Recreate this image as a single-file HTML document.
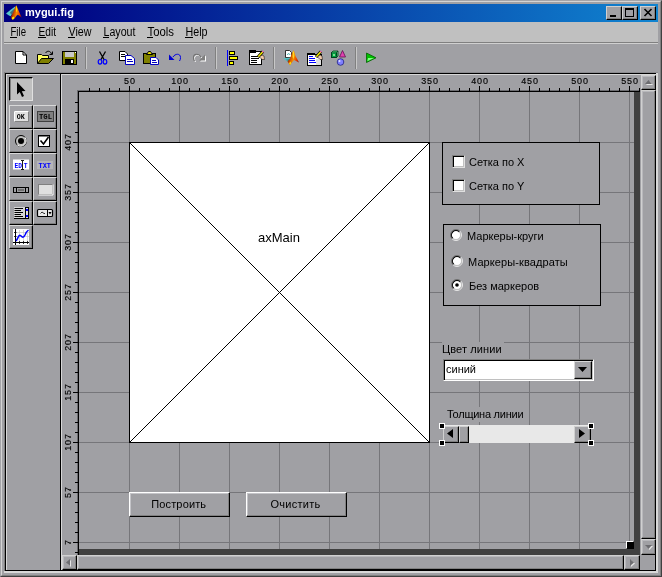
<!DOCTYPE html>
<html><head><meta charset="utf-8"><title>mygui.fig</title>
<style>
html,body{margin:0;padding:0;}
body{width:662px;height:577px;overflow:hidden;background:#a0a0a4;position:relative;font-family:"Liberation Sans",sans-serif;font-size:11px;color:#000;}
.a{position:absolute;box-sizing:border-box;}
.t{position:absolute;white-space:nowrap;line-height:1;}
.r{border:1px solid;border-color:#fff #000 #000 #fff;box-shadow:inset -1px -1px 0 #808080;background:#a0a0a4;}
.pb{width:24px;height:24px;border:1px solid;border-color:#d8d8d8 #000 #000 #d8d8d8;box-shadow:inset -1px -1px 0 #808080;background:#a0a0a4;}
.sb{border:1px solid;border-color:#d0d0d0 #000 #000 #d0d0d0;box-shadow:inset -1px -1px 0 #808080, inset 1px 1px 0 #b8b8bc;background:#a0a0a4;}
u{text-decoration:none;border-bottom:1px solid #000;}
svg{position:absolute;overflow:visible;}
</style></head><body><div id="w" style="position:absolute;left:0;top:0;width:662px;height:577px;will-change:transform;">
<div class="a" style="left:0;top:0;width:662px;height:577px;border:1px solid;border-color:#a4a4a8 #404040 #404040 #a4a4a8;"></div>
<div class="a" style="left:1px;top:1px;width:660px;height:575px;border:1px solid;border-color:#d4d4d4 #808080 #808080 #d4d4d4;"></div>
<div class="a" style="left:4px;top:4px;width:654px;height:18px;background:linear-gradient(to right,#000080 0%,#000484 8%,#1084d0 100%);"></div>
<svg style="left:0;top:0" width="30" height="24" viewBox="0 0 30 24">
<defs><linearGradient id="lg1" x1="0" y1="0.3" x2="1" y2="0.6"><stop offset="0" stop-color="#701000"/><stop offset="0.3" stop-color="#c84000"/><stop offset="0.55" stop-color="#f89000"/><stop offset="0.8" stop-color="#e84000"/><stop offset="1" stop-color="#901000"/></linearGradient></defs>
<polygon points="6,13.600 11,9.500 15.500,6.200 14,12 10.500,16.300 9,15.500" fill="#58c8c8"/>
<polygon points="10,12.500 14.500,8.500 13.500,13 11.500,15" fill="#407078"/>
<polygon points="11,16.500 13.500,11.500 15.300,7 16.300,5.200 17.500,8 19.200,12 21.800,17.800 19.500,15.800 17.800,14.800 16.500,15.800 14.500,18.500 12.800,19.800 11.500,18.500" fill="url(#lg1)"/>
<polygon points="15.800,7 16.400,5.500 17,8 17,12.500 16,11" fill="#ffe000"/>
<polygon points="12,17.500 14,16.500 14.200,18.500 12.800,19.800 11.800,18.800" fill="#ffe800"/>
</svg>
<div class="t" style="left:25px;top:7px;font-weight:bold;font-size:11px;color:#fff;">mygui.fig</div>
<div class="a r" style="left:606px;top:6px;width:16px;height:14px;border-color:#d0d0d0 #000 #000 #d0d0d0;"></div>
<div class="a" style="left:610px;top:15px;width:6px;height:2px;background:#000;"></div>
<div class="a r" style="left:622px;top:6px;width:16px;height:14px;border-color:#d0d0d0 #000 #000 #d0d0d0;"></div>
<div class="a" style="left:625px;top:8px;width:9px;height:9px;border:1px solid #000;border-top-width:2px;"></div>
<div class="a r" style="left:640px;top:6px;width:16px;height:14px;border-color:#d0d0d0 #000 #000 #d0d0d0;"></div>
<svg style="left:644px;top:9px" width="8" height="7" viewBox="0 0 8 7"><path d="M0.5,0 L7.5,7 M7.5,0 L0.5,7" stroke="#000" stroke-width="1.6" fill="none"/></svg>
<div class="a" style="left:4px;top:22px;width:654px;height:20px;background:#c0c0c0;"></div>
<div class="a" style="left:4px;top:42px;width:654px;height:1px;background:#808080;"></div>
<div class="a" style="left:4px;top:43px;width:654px;height:1px;background:#d0d0d0;"></div>
<svg style="left:0;top:22px" width="300" height="20" viewBox="0 22 300 20"><g font-size="12px" font-family="Liberation Sans, sans-serif"><text x="10.5" y="36" textLength="15.5" lengthAdjust="spacingAndGlyphs">File</text><rect x="10" y="37" width="7" height="1" fill="#000" shape-rendering="crispEdges"/><text x="38.5" y="36" textLength="17.5" lengthAdjust="spacingAndGlyphs">Edit</text><rect x="38" y="37" width="8" height="1" fill="#000" shape-rendering="crispEdges"/><text x="68.5" y="36" textLength="23" lengthAdjust="spacingAndGlyphs">View</text><rect x="68" y="37" width="7" height="1" fill="#000" shape-rendering="crispEdges"/><text x="103.5" y="36" textLength="32" lengthAdjust="spacingAndGlyphs">Layout</text><rect x="103" y="37" width="6" height="1" fill="#000" shape-rendering="crispEdges"/><text x="147.5" y="36" textLength="26.5" lengthAdjust="spacingAndGlyphs">Tools</text><rect x="147" y="37" width="6" height="1" fill="#000" shape-rendering="crispEdges"/><text x="185.5" y="36" textLength="22" lengthAdjust="spacingAndGlyphs">Help</text><rect x="185" y="37" width="8" height="1" fill="#000" shape-rendering="crispEdges"/></g></svg>
<svg style="left:0;top:44px" width="400" height="28" viewBox="0 44 400 28">
<defs><linearGradient id="lg2" x1="0" y1="0.3" x2="1" y2="0.6"><stop offset="0" stop-color="#701000"/><stop offset="0.3" stop-color="#d05000"/><stop offset="0.55" stop-color="#f89000"/><stop offset="0.8" stop-color="#e84000"/><stop offset="1" stop-color="#a01000"/></linearGradient></defs>
<g shape-rendering="crispEdges">
<!-- separators -->
<rect x="85" y="47" width="1" height="22" fill="#808080"/><rect x="86" y="47" width="1" height="22" fill="#c8c8c8"/>
<rect x="215" y="47" width="1" height="22" fill="#808080"/><rect x="216" y="47" width="1" height="22" fill="#c8c8c8"/>
<rect x="273" y="47" width="1" height="22" fill="#808080"/><rect x="274" y="47" width="1" height="22" fill="#c8c8c8"/>
<rect x="355" y="47" width="1" height="22" fill="#808080"/><rect x="356" y="47" width="1" height="22" fill="#c8c8c8"/>
</g>
<!-- new -->
<path d="M15.5,51.5 H23 L26.5,55 V63.5 H15.5 Z" fill="#fff" stroke="#000" stroke-width="1"/>
<path d="M23,51.5 V55 H26.5" fill="none" stroke="#000" stroke-width="1"/>
<!-- open -->
<path d="M37.5,63.5 V54.5 H41.5 L42.5,55.5 H48.5 V58" fill="#ffff60" stroke="#000" stroke-width="1"/>
<path d="M37.5,63.5 L41.5,58.5 H53.5 L48.5,63.5 Z" fill="#808000" stroke="#000" stroke-width="1"/>
<path d="M45.5,53 C47,50.5 50.5,50.5 51.5,54" fill="none" stroke="#000" stroke-width="1"/>
<path d="M49.5,54.5 H52.5 V51.5" fill="none" stroke="#000" stroke-width="1"/>
<!-- save -->
<rect x="62.500" y="51.500" width="14" height="13" fill="#808000" stroke="#000" stroke-width="1"/>
<rect x="65" y="52" width="9" height="5" fill="#c8c8c8"/>
<rect x="65" y="59" width="9" height="5" fill="#000"/>
<rect x="71" y="60" width="2" height="3" fill="#fff"/>
<rect x="75" y="52" width="1" height="1" fill="#fff"/>
<!-- cut -->
<path d="M99.500,51.500 L104.300,60 M105.500,51.500 L100.700,60" stroke="#000" stroke-width="1.300" fill="none"/>
<ellipse cx="100" cy="61.800" rx="1.800" ry="2.300" fill="none" stroke="#0000ff" stroke-width="1.200"/>
<ellipse cx="105" cy="61.800" rx="1.800" ry="2.300" fill="none" stroke="#0000ff" stroke-width="1.200"/>
<!-- copy -->
<path d="M119.500,51.500 H125 L127.500,54 V60.500 H119.500 Z" fill="#fff" stroke="#000" stroke-width="1"/>
<path d="M121,54.500 H125 M121,56.500 H125" stroke="#000" stroke-width="1" fill="none"/>
<path d="M125.500,55.500 H131 L134.500,58.500 V64.500 H125.500 Z" fill="#fff" stroke="#0000c0" stroke-width="1"/>
<path d="M127,59.500 H132 M127,61.500 H133" stroke="#0000c0" stroke-width="1" fill="none"/>
<!-- paste -->
<rect x="143.500" y="53.500" width="12" height="10" fill="#808000" stroke="#000" stroke-width="1"/>
<path d="M146.500,54.500 L148.500,51.500 H150.500 L152.500,54.500 Z" fill="#e8e000" stroke="#000" stroke-width="1"/>
<path d="M150.500,57.500 H156 L158.500,60 V64.500 H150.500 Z" fill="#fff" stroke="#0000c0" stroke-width="1"/>
<path d="M152,60.500 H156 M152,62.500 H157" stroke="#0000c0" stroke-width="1" fill="none"/>
<!-- undo -->
<path d="M173,57 C175,53.500 180.500,53 180.500,57.500 C180.500,59 180.200,60 179.500,61" fill="none" stroke="#0000e0" stroke-width="1"/>
<polygon points="169,54.500 169,60 174.500,60" fill="#0000d0"/>
<!-- redo (disabled) -->
<g transform="translate(-1,0)">
<path d="M203,58 C201,54.500 195.500,54 195.500,58.500 C195.500,60 195.800,61 196.500,62" fill="none" stroke="#fff" stroke-width="1"/>
<polygon points="207,55.500 207,61.500 201,61.500" fill="#fff"/>
<path d="M202,57 C200,53.500 194.500,53 194.500,57.500 C194.500,59 194.800,60 195.500,61" fill="none" stroke="#707070" stroke-width="1.100"/>
<polygon points="206,54.500 206,60.500 200,60.500" fill="#808080"/>
</g>
<!-- align -->
<rect x="227" y="50" width="1" height="16" fill="#0000ff"/>
<rect x="229.500" y="51.500" width="5" height="3" fill="#ffff00" stroke="#000" stroke-width="1"/>
<rect x="229.500" y="56.500" width="8" height="3" fill="#ffff00" stroke="#000" stroke-width="1"/>
<rect x="229.500" y="61.500" width="4" height="3" fill="#ffff00" stroke="#000" stroke-width="1"/>
<!-- menu editor -->
<rect x="249.500" y="51.500" width="12" height="13" fill="#fff" stroke="#000" stroke-width="1"/>
<rect x="249" y="50" width="7" height="3" fill="#000"/>
<path d="M251,56.500 H259 M251,58.500 H259 M251,60.500 H257 M251,62.500 H257" stroke="#000" stroke-width="1" fill="none"/>
<path d="M258,57 L263,51.500" stroke="#000" stroke-width="3" fill="none"/>
<path d="M258.300,56.700 L262.800,51.700" stroke="#f0e800" stroke-width="1.600" fill="none"/>
<path d="M262.300,51.200 L263.500,52.300" stroke="#f060c0" stroke-width="1.500"/>
<path d="M259.500,57 L262,55 L264,56 L264.500,59.500 L262,59.500 Z" fill="#f0c8a8" stroke="#000" stroke-width="0.500"/>
<!-- m-file editor -->
<path d="M285.500,50.500 H289.500 L291.500,52.500 V57.500 H285.500 Z" fill="#fff" stroke="#202020" stroke-width="0.900"/>
<path d="M287.300,54.800 C288,53.300 289.300,53.300 290,54.800" stroke="#30a8a8" stroke-width="1" fill="none"/>
<polygon points="283,58.200 291.500,57.500 290,61 288,62 286,60.500" fill="#58c0c0"/>
<polygon points="285.500,59.800 290.500,58.500 289,61.500" fill="#389098"/>
<polygon points="287.500,61.500 290,58.500 292,53 293.800,50.300 295.500,56 299,62.500 296.500,61.200 294,60 291.500,63 290,65.300" fill="url(#lg2)"/>
<polygon points="292.700,52.500 293.800,50.500 294.300,56 293.400,59 292.600,57" fill="#ffd820"/>
<polygon points="289,63 290.800,61.500 291,63.500 290,65.300" fill="#ffe000"/>
<!-- property inspector -->
<rect x="307.500" y="54.500" width="14" height="11" fill="#fff" stroke="#000" stroke-width="1"/>
<rect x="316" y="59" width="5" height="6" fill="#e0e0e0"/>
<rect x="307" y="53" width="8" height="2" fill="#000"/>
<path d="M309,56.500 H313 M309,58.500 H315 M309,60.500 H315 M309,62.500 H316" stroke="#0000ff" stroke-width="1" fill="none"/>
<path d="M316,57 L321,51.500" stroke="#000" stroke-width="3" fill="none"/>
<path d="M316.300,56.700 L320.800,51.700" stroke="#f0e800" stroke-width="1.600" fill="none"/>
<path d="M320.300,51.200 L321.500,52.300" stroke="#f060c0" stroke-width="1.500"/>
<path d="M317.500,57 L320,55 L322,56 L322.500,59.500 L320,59.500 Z" fill="#f0c8a8" stroke="#000" stroke-width="0.500"/>
<!-- object browser -->
<rect x="331.500" y="52.500" width="5" height="5" fill="#00a040" stroke="#004020" stroke-width="1"/>
<path d="M331.500,52.500 L333,51 H338 L336.500,52.500 M338,51 V56 L336.500,57.500" fill="#40d070" stroke="#004020" stroke-width="0.800"/>
<path d="M333,55 H335 M334,54 V56" stroke="#c0ffc0" stroke-width="0.800"/>
<polygon points="342.500,50.500 345.500,57 339.500,57" fill="#e040b0" stroke="#601050" stroke-width="0.800"/>
<circle cx="340.500" cy="62" r="3.300" fill="#8080ff" stroke="#202080" stroke-width="0.800"/>
<circle cx="339.500" cy="61" r="1" fill="#e0e0ff"/>
<!-- run -->
<polygon points="366.500,53 376,57.800 366.500,62.500" fill="#00c000" stroke="#006000" stroke-width="0.800"/>
<polygon points="368,58 374,58 367.300,61.300" fill="#80ff80"/>
</svg>

<div class="a" style="left:4px;top:72px;width:654px;height:1px;background:#8c8c90;"></div>
<div class="a" style="left:4px;top:72px;width:1px;height:500px;background:#808080;"></div>
<div class="a" style="left:5px;top:73px;width:653px;height:1px;background:#000;"></div>
<div class="a" style="left:6px;top:74px;width:650px;height:1px;background:#d8d8d8;"></div>
<div class="a" style="left:5px;top:73px;width:1px;height:498px;background:#000;"></div>
<div class="a" style="left:6px;top:74px;width:1px;height:496px;background:#d8d8d8;"></div>
<div class="a" style="left:60px;top:74px;width:1px;height:497px;background:#000;"></div>
<div class="a" style="left:61px;top:75px;width:1px;height:495px;background:#d8d8d8;"></div>
<div class="a" style="left:5px;top:570px;width:651px;height:1px;background:#000;"></div>
<div class="a" style="left:4px;top:571px;width:654px;height:2px;background:#d8d8d8;"></div>
<div class="a" style="left:656px;top:73px;width:2px;height:500px;background:#d8d8d8;"></div>
<div class="a" style="left:655px;top:555px;width:1px;height:16px;background:#000;"></div>
<div class="a" style="left:9px;top:77px;width:24px;height:24px;background:#c0c0c0;border:1px solid;border-color:#000 #e0e0e0 #e0e0e0 #000;box-shadow:inset 1px 1px 0 #808080;"></div>
<div class="a pb" style="left:9px;top:105px;"></div>
<div class="a pb" style="left:33px;top:105px;"></div>
<div class="a pb" style="left:9px;top:129px;"></div>
<div class="a pb" style="left:33px;top:129px;"></div>
<div class="a pb" style="left:9px;top:153px;"></div>
<div class="a pb" style="left:33px;top:153px;"></div>
<div class="a pb" style="left:9px;top:177px;"></div>
<div class="a pb" style="left:33px;top:177px;"></div>
<div class="a pb" style="left:9px;top:201px;"></div>
<div class="a pb" style="left:33px;top:201px;"></div>
<div class="a pb" style="left:9px;top:225px;"></div>
<svg style="left:0;top:74px" width="62" height="180" viewBox="0 74 62 180">
<!-- arrow -->
<polygon points="17,82 17,94.500 19.800,92 22,97 24,96 21.800,91.200 25.500,91" fill="#000"/>
<g font-family="Liberation Mono, monospace" font-weight="bold" font-size="7px">
<!-- OK -->
<rect x="14.500" y="111.500" width="14" height="10" fill="#e0e0e0" stroke="#808080" stroke-width="1"/>
<path d="M14.500,121.500 V111.500 H28.500" stroke="#fff" stroke-width="1" fill="none"/>
<text x="16.800" y="119.200" textLength="8" lengthAdjust="spacingAndGlyphs" font-size="6.500px">OK</text>
<!-- TGL -->
<rect x="37.500" y="111.500" width="16" height="10" fill="#808080" stroke="#404040" stroke-width="1"/>
<text x="39" y="119.300" textLength="13" lengthAdjust="spacingAndGlyphs">TGL</text>
<!-- EDIT -->
<rect x="13" y="159.500" width="16" height="10" fill="#fff"/>
<text x="14.500" y="167.800" fill="#0000ff" textLength="7.500" lengthAdjust="spacingAndGlyphs">ED</text>
<text x="23.800" y="167.800" fill="#0000ff" textLength="3.800" lengthAdjust="spacingAndGlyphs">T</text>
<path d="M22.500,161 V169 M21,160.500 H24 M21,169.500 H24" stroke="#000" stroke-width="0.900" fill="none"/>
<!-- TXT -->
<rect x="37" y="161" width="16" height="8" fill="#b4b4b8"/>
<text x="38.500" y="167.800" fill="#0000ff" textLength="12.500" lengthAdjust="spacingAndGlyphs">TXT</text>
</g>
<!-- radio -->
<circle cx="21" cy="141" r="5.500" fill="#c0c0c0" stroke="#000" stroke-width="1"/>
<path d="M17.200,144.800 A5.400,5.400 0 0 0 24.800,137.200" stroke="#fff" stroke-width="1" fill="none"/>
<circle cx="21" cy="141" r="3" fill="#000"/>
<!-- checkbox -->
<rect x="38.500" y="135.500" width="11" height="11" fill="#fff" stroke="#000" stroke-width="1"/>
<rect x="38" y="135" width="12" height="1.500" fill="#000"/>
<path d="M40.500,140.500 L43.500,144 L48.500,137" stroke="#000" stroke-width="1.600" fill="none"/>
<!-- slider -->
<rect x="13.500" y="187.500" width="15" height="5" fill="#a0a0a4" stroke="#000" stroke-width="1"/>
<path d="M16.500,188 V192 M25.500,188 V192" stroke="#000" stroke-width="1"/>
<rect x="18" y="189" width="6" height="2" fill="#707070"/>
<!-- frame -->
<rect x="38.500" y="184.500" width="14" height="10" fill="#e0e0e0" stroke="#808080" stroke-width="1"/>
<path d="M38.500,195 H53 V184.500" stroke="#fff" stroke-width="1" fill="none"/>
<!-- listbox -->
<rect x="14" y="207" width="12" height="12" fill="#d8d8d8"/>
<path d="M14.500,208.500 H23 M14.500,210.500 H21 M14.500,212.500 H23 M14.500,214.500 H21 M14.500,216.500 H23 M14,218.500 H29" stroke="#000" stroke-width="1" fill="none"/>
<rect x="25.500" y="207.500" width="3" height="11" fill="#e0e0e0" stroke="#000" stroke-width="1"/>
<rect x="26" y="209" width="2" height="2" fill="#0000ff"/><rect x="26" y="215" width="2" height="2" fill="#0000ff"/>
<!-- popup -->
<rect x="37.500" y="209.500" width="15" height="7" rx="1" fill="#e8e8e8" stroke="#000" stroke-width="1.200"/>
<path d="M47.500,210 V216" stroke="#000" stroke-width="1"/>
<path d="M40.500,213.500 L42,212 L44,213.500 H45" stroke="#000" stroke-width="0.800" fill="none"/>
<polygon points="48.500,212 51.500,212 50,214.500" fill="#000"/>
<!-- axes -->
<rect x="13" y="229" width="16" height="16" fill="#fff"/>
<path d="M15.500,229 V245 M13,242.500 H29" stroke="#000" stroke-width="1" fill="none"/>
<path d="M14,232.500 H17 M14,236.500 H17 M19.500,241 V244 M23.500,241 V244 M27.500,241 V244" stroke="#000" stroke-width="0.800" fill="none"/>
<path d="M19.500,230 V241 M23.500,230 V241 M27.500,230 V241 M16,232.500 H29 M16,236.500 H29" stroke="#c0c0c0" stroke-width="0.600" fill="none"/>
<path d="M16,241 C18,239 18.500,234 20.500,235.500 C22.500,237.500 23.500,238 25,235 C26,232.500 27,231 28.500,230" stroke="#0000ff" stroke-width="1.500" fill="none"/>
</svg>

<svg style="left:0;top:0" width="662" height="577" viewBox="0 0 662 577" shape-rendering="crispEdges"><rect x="129" y="92" width="1" height="457" fill="#76767a"/><rect x="179" y="92" width="1" height="457" fill="#76767a"/><rect x="229" y="92" width="1" height="457" fill="#76767a"/><rect x="279" y="92" width="1" height="457" fill="#76767a"/><rect x="329" y="92" width="1" height="457" fill="#76767a"/><rect x="379" y="92" width="1" height="457" fill="#76767a"/><rect x="429" y="92" width="1" height="457" fill="#76767a"/><rect x="479" y="92" width="1" height="457" fill="#76767a"/><rect x="529" y="92" width="1" height="457" fill="#76767a"/><rect x="579" y="92" width="1" height="457" fill="#76767a"/><rect x="629" y="92" width="1" height="457" fill="#76767a"/><rect x="79" y="142" width="555" height="1" fill="#76767a"/><rect x="79" y="192" width="555" height="1" fill="#76767a"/><rect x="79" y="242" width="555" height="1" fill="#76767a"/><rect x="79" y="292" width="555" height="1" fill="#76767a"/><rect x="79" y="342" width="555" height="1" fill="#76767a"/><rect x="79" y="392" width="555" height="1" fill="#76767a"/><rect x="79" y="442" width="555" height="1" fill="#76767a"/><rect x="79" y="492" width="555" height="1" fill="#76767a"/><rect x="79" y="542" width="555" height="1" fill="#76767a"/><rect x="634" y="92" width="6" height="463" fill="#404040"/><rect x="79" y="549" width="561" height="6" fill="#404040"/><rect x="77" y="90" width="563" height="1" fill="#6c6c70"/><rect x="77" y="90" width="1" height="465" fill="#6c6c70"/><rect x="78" y="91" width="562" height="1" fill="#000"/><rect x="78" y="91" width="1" height="464" fill="#000"/><rect x="89" y="88" width="1" height="3" fill="#000"/><rect x="99" y="88" width="1" height="3" fill="#000"/><rect x="109" y="88" width="1" height="3" fill="#000"/><rect x="119" y="88" width="1" height="3" fill="#000"/><rect x="129" y="86" width="1" height="5" fill="#000"/><rect x="139" y="88" width="1" height="3" fill="#000"/><rect x="149" y="88" width="1" height="3" fill="#000"/><rect x="159" y="88" width="1" height="3" fill="#000"/><rect x="169" y="88" width="1" height="3" fill="#000"/><rect x="179" y="86" width="1" height="5" fill="#000"/><rect x="189" y="88" width="1" height="3" fill="#000"/><rect x="199" y="88" width="1" height="3" fill="#000"/><rect x="209" y="88" width="1" height="3" fill="#000"/><rect x="219" y="88" width="1" height="3" fill="#000"/><rect x="229" y="86" width="1" height="5" fill="#000"/><rect x="239" y="88" width="1" height="3" fill="#000"/><rect x="249" y="88" width="1" height="3" fill="#000"/><rect x="259" y="88" width="1" height="3" fill="#000"/><rect x="269" y="88" width="1" height="3" fill="#000"/><rect x="279" y="86" width="1" height="5" fill="#000"/><rect x="289" y="88" width="1" height="3" fill="#000"/><rect x="299" y="88" width="1" height="3" fill="#000"/><rect x="309" y="88" width="1" height="3" fill="#000"/><rect x="319" y="88" width="1" height="3" fill="#000"/><rect x="329" y="86" width="1" height="5" fill="#000"/><rect x="339" y="88" width="1" height="3" fill="#000"/><rect x="349" y="88" width="1" height="3" fill="#000"/><rect x="359" y="88" width="1" height="3" fill="#000"/><rect x="369" y="88" width="1" height="3" fill="#000"/><rect x="379" y="86" width="1" height="5" fill="#000"/><rect x="389" y="88" width="1" height="3" fill="#000"/><rect x="399" y="88" width="1" height="3" fill="#000"/><rect x="409" y="88" width="1" height="3" fill="#000"/><rect x="419" y="88" width="1" height="3" fill="#000"/><rect x="429" y="86" width="1" height="5" fill="#000"/><rect x="439" y="88" width="1" height="3" fill="#000"/><rect x="449" y="88" width="1" height="3" fill="#000"/><rect x="459" y="88" width="1" height="3" fill="#000"/><rect x="469" y="88" width="1" height="3" fill="#000"/><rect x="479" y="86" width="1" height="5" fill="#000"/><rect x="489" y="88" width="1" height="3" fill="#000"/><rect x="499" y="88" width="1" height="3" fill="#000"/><rect x="509" y="88" width="1" height="3" fill="#000"/><rect x="519" y="88" width="1" height="3" fill="#000"/><rect x="529" y="86" width="1" height="5" fill="#000"/><rect x="539" y="88" width="1" height="3" fill="#000"/><rect x="549" y="88" width="1" height="3" fill="#000"/><rect x="559" y="88" width="1" height="3" fill="#000"/><rect x="569" y="88" width="1" height="3" fill="#000"/><rect x="579" y="86" width="1" height="5" fill="#000"/><rect x="589" y="88" width="1" height="3" fill="#000"/><rect x="599" y="88" width="1" height="3" fill="#000"/><rect x="609" y="88" width="1" height="3" fill="#000"/><rect x="619" y="88" width="1" height="3" fill="#000"/><rect x="629" y="86" width="1" height="5" fill="#000"/><rect x="639" y="88" width="1" height="3" fill="#000"/><rect x="75" y="552" width="3" height="1" fill="#000"/><rect x="73" y="542" width="5" height="1" fill="#000"/><rect x="75" y="532" width="3" height="1" fill="#000"/><rect x="75" y="522" width="3" height="1" fill="#000"/><rect x="75" y="512" width="3" height="1" fill="#000"/><rect x="75" y="502" width="3" height="1" fill="#000"/><rect x="73" y="492" width="5" height="1" fill="#000"/><rect x="75" y="482" width="3" height="1" fill="#000"/><rect x="75" y="472" width="3" height="1" fill="#000"/><rect x="75" y="462" width="3" height="1" fill="#000"/><rect x="75" y="452" width="3" height="1" fill="#000"/><rect x="73" y="442" width="5" height="1" fill="#000"/><rect x="75" y="432" width="3" height="1" fill="#000"/><rect x="75" y="422" width="3" height="1" fill="#000"/><rect x="75" y="412" width="3" height="1" fill="#000"/><rect x="75" y="402" width="3" height="1" fill="#000"/><rect x="73" y="392" width="5" height="1" fill="#000"/><rect x="75" y="382" width="3" height="1" fill="#000"/><rect x="75" y="372" width="3" height="1" fill="#000"/><rect x="75" y="362" width="3" height="1" fill="#000"/><rect x="75" y="352" width="3" height="1" fill="#000"/><rect x="73" y="342" width="5" height="1" fill="#000"/><rect x="75" y="332" width="3" height="1" fill="#000"/><rect x="75" y="322" width="3" height="1" fill="#000"/><rect x="75" y="312" width="3" height="1" fill="#000"/><rect x="75" y="302" width="3" height="1" fill="#000"/><rect x="73" y="292" width="5" height="1" fill="#000"/><rect x="75" y="282" width="3" height="1" fill="#000"/><rect x="75" y="272" width="3" height="1" fill="#000"/><rect x="75" y="262" width="3" height="1" fill="#000"/><rect x="75" y="252" width="3" height="1" fill="#000"/><rect x="73" y="242" width="5" height="1" fill="#000"/><rect x="75" y="232" width="3" height="1" fill="#000"/><rect x="75" y="222" width="3" height="1" fill="#000"/><rect x="75" y="212" width="3" height="1" fill="#000"/><rect x="75" y="202" width="3" height="1" fill="#000"/><rect x="73" y="192" width="5" height="1" fill="#000"/><rect x="75" y="182" width="3" height="1" fill="#000"/><rect x="75" y="172" width="3" height="1" fill="#000"/><rect x="75" y="162" width="3" height="1" fill="#000"/><rect x="75" y="152" width="3" height="1" fill="#000"/><rect x="73" y="142" width="5" height="1" fill="#000"/><rect x="75" y="132" width="3" height="1" fill="#000"/><rect x="75" y="122" width="3" height="1" fill="#000"/><rect x="75" y="112" width="3" height="1" fill="#000"/><rect x="75" y="102" width="3" height="1" fill="#000"/></svg>
<div class="t" style="left:115px;width:30px;text-align:center;top:77px;font-size:9px;letter-spacing:0.9px;-webkit-text-stroke:0.15px #000;">50</div>
<div class="t" style="left:165px;width:30px;text-align:center;top:77px;font-size:9px;letter-spacing:0.9px;-webkit-text-stroke:0.15px #000;">100</div>
<div class="t" style="left:215px;width:30px;text-align:center;top:77px;font-size:9px;letter-spacing:0.9px;-webkit-text-stroke:0.15px #000;">150</div>
<div class="t" style="left:265px;width:30px;text-align:center;top:77px;font-size:9px;letter-spacing:0.9px;-webkit-text-stroke:0.15px #000;">200</div>
<div class="t" style="left:315px;width:30px;text-align:center;top:77px;font-size:9px;letter-spacing:0.9px;-webkit-text-stroke:0.15px #000;">250</div>
<div class="t" style="left:365px;width:30px;text-align:center;top:77px;font-size:9px;letter-spacing:0.9px;-webkit-text-stroke:0.15px #000;">300</div>
<div class="t" style="left:415px;width:30px;text-align:center;top:77px;font-size:9px;letter-spacing:0.9px;-webkit-text-stroke:0.15px #000;">350</div>
<div class="t" style="left:465px;width:30px;text-align:center;top:77px;font-size:9px;letter-spacing:0.9px;-webkit-text-stroke:0.15px #000;">400</div>
<div class="t" style="left:515px;width:30px;text-align:center;top:77px;font-size:9px;letter-spacing:0.9px;-webkit-text-stroke:0.15px #000;">450</div>
<div class="t" style="left:565px;width:30px;text-align:center;top:77px;font-size:9px;letter-spacing:0.9px;-webkit-text-stroke:0.15px #000;">500</div>
<div class="t" style="left:615px;width:30px;text-align:center;top:77px;font-size:9px;letter-spacing:0.9px;-webkit-text-stroke:0.15px #000;">550</div>
<div class="t" style="left:54px;width:30px;height:10px;text-align:center;top:137px;font-size:9px;letter-spacing:0.9px;-webkit-text-stroke:0.15px #000;transform:rotate(-90deg);transform-origin:15px 5px;">407</div>
<div class="t" style="left:54px;width:30px;height:10px;text-align:center;top:187px;font-size:9px;letter-spacing:0.9px;-webkit-text-stroke:0.15px #000;transform:rotate(-90deg);transform-origin:15px 5px;">357</div>
<div class="t" style="left:54px;width:30px;height:10px;text-align:center;top:237px;font-size:9px;letter-spacing:0.9px;-webkit-text-stroke:0.15px #000;transform:rotate(-90deg);transform-origin:15px 5px;">307</div>
<div class="t" style="left:54px;width:30px;height:10px;text-align:center;top:287px;font-size:9px;letter-spacing:0.9px;-webkit-text-stroke:0.15px #000;transform:rotate(-90deg);transform-origin:15px 5px;">257</div>
<div class="t" style="left:54px;width:30px;height:10px;text-align:center;top:337px;font-size:9px;letter-spacing:0.9px;-webkit-text-stroke:0.15px #000;transform:rotate(-90deg);transform-origin:15px 5px;">207</div>
<div class="t" style="left:54px;width:30px;height:10px;text-align:center;top:387px;font-size:9px;letter-spacing:0.9px;-webkit-text-stroke:0.15px #000;transform:rotate(-90deg);transform-origin:15px 5px;">157</div>
<div class="t" style="left:54px;width:30px;height:10px;text-align:center;top:437px;font-size:9px;letter-spacing:0.9px;-webkit-text-stroke:0.15px #000;transform:rotate(-90deg);transform-origin:15px 5px;">107</div>
<div class="t" style="left:54px;width:30px;height:10px;text-align:center;top:487px;font-size:9px;letter-spacing:0.9px;-webkit-text-stroke:0.15px #000;transform:rotate(-90deg);transform-origin:15px 5px;">57</div>
<div class="t" style="left:54px;width:30px;height:10px;text-align:center;top:537px;font-size:9px;letter-spacing:0.9px;-webkit-text-stroke:0.15px #000;transform:rotate(-90deg);transform-origin:15px 5px;">7</div>
<div class="a" style="left:129px;top:142px;width:301px;height:301px;background:#fff;border:1px solid #000;"></div>
<svg style="left:129px;top:142px" width="301" height="301" viewBox="0 0 301 301"><path d="M0.5,0.5 L300.5,300.5 M300.5,0.5 L0.5,300.5" stroke="#000" stroke-width="1" fill="none"/></svg>
<div class="t" style="left:229px;width:100px;text-align:center;top:231px;font-size:13px;">axMain</div>
<div class="a" style="left:442px;top:142px;width:158px;height:63px;border:1px solid #000;background:#a0a0a4;"></div>
<div class="a" style="left:452px;top:155px;width:13px;height:13px;background:#fff;border:1px solid;border-color:#808080 #e0e0e0 #e0e0e0 #808080;box-shadow:inset 1px 1px 0 #000, inset -1px -1px 0 #c0c0c0;"></div>
<div class="a" style="left:452px;top:179px;width:13px;height:13px;background:#fff;border:1px solid;border-color:#808080 #e0e0e0 #e0e0e0 #808080;box-shadow:inset 1px 1px 0 #000, inset -1px -1px 0 #c0c0c0;"></div>
<div class="t" style="left:469px;top:157px;">Сетка по X</div>
<div class="t" style="left:469px;top:181px;">Сетка по Y</div>
<div class="a" style="left:443px;top:224px;width:158px;height:82px;border:1px solid #000;background:#a0a0a4;"></div>
<svg style="left:450px;top:229px" width="12" height="12" viewBox="0 0 12 12"><path d="M2.100,9.900 A5.500,5.500 0 0 1 9.900,2.100" stroke="#707070" stroke-width="1" fill="none"/><path d="M9.900,2.100 A5.500,5.500 0 0 1 2.100,9.900" stroke="#e8e8e8" stroke-width="1" fill="none"/><circle cx="6" cy="6" r="4.500" fill="#fff"/><path d="M2.800,9.200 A4.500,4.500 0 0 1 9.200,2.800" stroke="#000" stroke-width="1.100" fill="none"/><path d="M9.200,2.800 A4.500,4.500 0 0 1 2.800,9.200" stroke="#c0c0c0" stroke-width="1" fill="none"/></svg>
<svg style="left:451px;top:255px" width="12" height="12" viewBox="0 0 12 12"><path d="M2.100,9.900 A5.500,5.500 0 0 1 9.900,2.100" stroke="#707070" stroke-width="1" fill="none"/><path d="M9.900,2.100 A5.500,5.500 0 0 1 2.100,9.900" stroke="#e8e8e8" stroke-width="1" fill="none"/><circle cx="6" cy="6" r="4.500" fill="#fff"/><path d="M2.800,9.200 A4.500,4.500 0 0 1 9.200,2.800" stroke="#000" stroke-width="1.100" fill="none"/><path d="M9.200,2.800 A4.500,4.500 0 0 1 2.800,9.200" stroke="#c0c0c0" stroke-width="1" fill="none"/></svg>
<svg style="left:451px;top:279px" width="12" height="12" viewBox="0 0 12 12"><path d="M2.100,9.900 A5.500,5.500 0 0 1 9.900,2.100" stroke="#707070" stroke-width="1" fill="none"/><path d="M9.900,2.100 A5.500,5.500 0 0 1 2.100,9.900" stroke="#e8e8e8" stroke-width="1" fill="none"/><circle cx="6" cy="6" r="4.500" fill="#fff"/><path d="M2.800,9.200 A4.500,4.500 0 0 1 9.200,2.800" stroke="#000" stroke-width="1.100" fill="none"/><path d="M9.200,2.800 A4.500,4.500 0 0 1 2.800,9.200" stroke="#c0c0c0" stroke-width="1" fill="none"/><circle cx="6" cy="6" r="1.8" fill="#000"/></svg>
<div class="t" style="left:467px;top:231px;">Маркеры-круги</div>
<div class="t" style="left:468px;top:257px;letter-spacing:0.1px;">Маркеры-квадраты</div>
<div class="t" style="left:469px;top:281px;">Без маркеров</div>
<div class="a" style="left:442px;top:342px;width:62px;height:17px;background:#a0a0a4;"></div>
<div class="t" style="left:442px;top:344px;letter-spacing:0.1px;">Цвет линии</div>
<div class="a" style="left:443px;top:359px;width:151px;height:22px;background:#fff;border:1px solid;border-color:#808080 #fff #fff #808080;box-shadow:inset 1px 1px 0 #000, inset -1px -1px 0 #c0c0c0;"></div>
<div class="a r" style="left:574px;top:361px;width:18px;height:18px;border-color:#d8d8d8 #000 #000 #d8d8d8;"></div>
<svg style="left:578px;top:367px" width="9" height="5" viewBox="0 0 9 5"><polygon points="0,0 9,0 4.5,5" fill="#000"/></svg>
<div class="t" style="left:446px;top:364px;">синий</div>
<div class="a" style="left:445px;top:407px;width:82px;height:15px;background:#a0a0a4;"></div>
<div class="t" style="left:447px;top:409px;letter-spacing:-0.25px;">Толщина линии</div>
<div class="a" style="left:443px;top:425px;width:148px;height:18px;background:#e8e8e8;"></div>
<div class="a r" style="left:443px;top:426px;width:16px;height:17px;border-color:#d0d0d0 #000 #000 #d0d0d0;"></div>
<div class="a r" style="left:459px;top:426px;width:10px;height:17px;border-color:#d0d0d0 #000 #000 #d0d0d0;"></div>
<div class="a r" style="left:574px;top:426px;width:17px;height:17px;border-color:#d0d0d0 #000 #000 #d0d0d0;"></div>
<svg style="left:447px;top:429px" width="6" height="9" viewBox="0 0 6 9"><polygon points="6,0 6,9 0,4.5" fill="#000"/></svg>
<svg style="left:579px;top:429px" width="6" height="9" viewBox="0 0 6 9"><polygon points="0,0 0,9 6,4.5" fill="#000"/></svg>
<div class="a" style="left:439px;top:423px;width:6px;height:6px;background:#000;border:1px solid #fff;"></div>
<div class="a" style="left:588px;top:423px;width:6px;height:6px;background:#000;border:1px solid #fff;"></div>
<div class="a" style="left:439px;top:440px;width:6px;height:6px;background:#000;border:1px solid #fff;"></div>
<div class="a" style="left:588px;top:440px;width:6px;height:6px;background:#000;border:1px solid #fff;"></div>
<div class="a r" style="left:129px;top:492px;width:101px;height:25px;text-align:center;line-height:23px;letter-spacing:0.14px;padding-right:1.5px;box-shadow:inset -1px -1px 0 #808080, inset 1px 1px 0 #c4c4c8;">Построить</div>
<div class="a r" style="left:246px;top:492px;width:101px;height:25px;text-align:center;line-height:23px;letter-spacing:0.29px;padding-right:2px;box-shadow:inset -1px -1px 0 #808080, inset 1px 1px 0 #c4c4c8;">Очистить</div>
<div class="a" style="left:626px;top:541px;width:8px;height:8px;background:#000;border:1px solid;border-color:#fff #000 #000 #fff;"></div>
<div class="a sb" style="left:641px;top:75px;width:15px;height:15px;"></div>
<svg style="left:645px;top:80px" width="8" height="5" viewBox="0 0 8 5"><polygon points="0,4 7,4 3.5,0" fill="#e4e4e4" transform="translate(1,1)"/><polygon points="0,4 7,4 3.5,0" fill="#6c6c70"/></svg>
<div class="a sb" style="left:641px;top:90px;width:15px;height:449px;"></div>
<div class="a sb" style="left:641px;top:539px;width:15px;height:16px;"></div>
<svg style="left:645px;top:545px" width="8" height="5" viewBox="0 0 8 5"><polygon points="0,0 7,0 3.5,4" fill="#e4e4e4" transform="translate(1,1)"/><polygon points="0,0 7,0 3.5,4" fill="#6c6c70"/></svg>
<div class="a sb" style="left:62px;top:555px;width:15px;height:15px;"></div>
<svg style="left:66px;top:559px" width="5" height="8" viewBox="0 0 5 8"><polygon points="4,0 4,7 0,3.5" fill="#e4e4e4" transform="translate(1,1)"/><polygon points="4,0 4,7 0,3.5" fill="#6c6c70"/></svg>
<div class="a sb" style="left:77px;top:555px;width:547px;height:15px;"></div>
<div class="a sb" style="left:624px;top:555px;width:16px;height:15px;"></div>
<svg style="left:630px;top:559px" width="5" height="8" viewBox="0 0 5 8"><polygon points="0,0 0,7 4,3.5" fill="#e4e4e4" transform="translate(1,1)"/><polygon points="0,0 0,7 4,3.5" fill="#6c6c70"/></svg>
</div></body></html>
